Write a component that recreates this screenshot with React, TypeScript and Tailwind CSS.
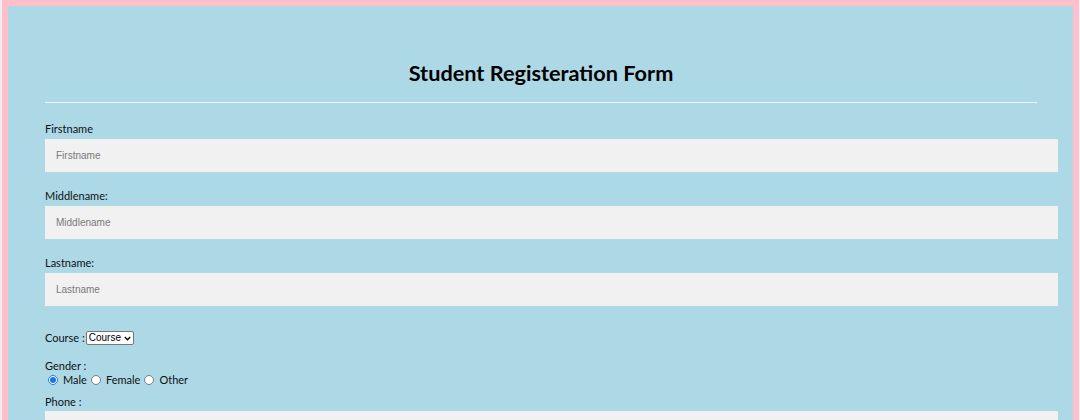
import { useState } from 'react';

const labelCls = "block text-[11px] leading-[14px] text-[#111]";
const inputCls =
  "block w-full h-[33px] bg-[#f1f1f1] pl-[11px] text-[10px] text-[#333] placeholder:text-[#7a7a7a] outline-none font-['Liberation_Sans',Arial,sans-serif]";

function Field({ label, placeholder }: { label: string; placeholder: string }) {
  return (
    <div className="mb-[17px]">
      <label className={labelCls}>{label}</label>
      <input className={`${inputCls} mt-[3px]`} placeholder={placeholder} />
    </div>
  );
}

export default function App() {
  const [gender, setGender] = useState('male');

  return (
    <div className="min-h-screen bg-[#ffc0cb] border-l-2 border-l-[#eeeeee] border-r border-r-[#f5f5f5] pt-[6px] pl-[6px] pr-[6px] font-['Lato',sans-serif]">
      <div className="bg-[#add8e6] pl-[37px] pr-[15px] pt-[55px] pb-10 min-h-[414px]">
        <div className="mr-[21px]">
          <h1 className="text-center text-[21.7px] leading-[24px] font-bold text-black">
            Student Registeration Form
          </h1>
          <hr className="mt-[17px] border-0 h-px bg-[#f4f4f4]" />
        </div>

        <div className="mt-[19px]">
          <Field label="Firstname" placeholder="Firstname" />
          <Field label="Middlename:" placeholder="Middlename" />
          <Field label="Lastname:" placeholder="Lastname" />
        </div>

        <div className="mt-[25px] flex items-center h-[14px] text-[11px] text-[#111]">
          <span>Course :</span>
          <span className="ml-[1px] flex items-center h-[14px] w-[48px] bg-white border border-[#767676] rounded-[2px] pl-[2px] pr-[2px]">
            <select className="appearance-none bg-transparent outline-none text-[10px] leading-[12px] font-['Liberation_Sans',Arial,sans-serif] text-black flex-1 min-w-0">
              <option>Course</option>
              <option>BCA</option>
              <option>BBA</option>
              <option>B.Tech</option>
            </select>
            <svg width="7" height="5" viewBox="0 0 7 5" className="shrink-0">
              <path d="M0.8 1 L3.5 3.8 L6.2 1" fill="none" stroke="#000" strokeWidth="1.3" />
            </svg>
          </span>
        </div>

        <div className="mt-[14px] text-[11px] leading-[14px] text-[#111]">
          <div>Gender :</div>
          <div className="flex items-center h-[14px] pl-[3px]">
            {['Male', 'Female', 'Other'].map((g) => (
              <label key={g} className="flex items-center mr-[4px]">
                <input
                  type="radio"
                  name="gender"
                  checked={gender === g.toLowerCase()}
                  onChange={() => setGender(g.toLowerCase())}
                  className="w-[10px] h-[10px] m-0 mr-[5px] accent-[#1a73e8]"
                />
                <span>{g}</span>
              </label>
            ))}
          </div>
          <div className="mt-[8px]">Phone :</div>
          <input className={`${inputCls} mt-[2px]`} placeholder="Phone" />
        </div>
      </div>
    </div>
  );
}
